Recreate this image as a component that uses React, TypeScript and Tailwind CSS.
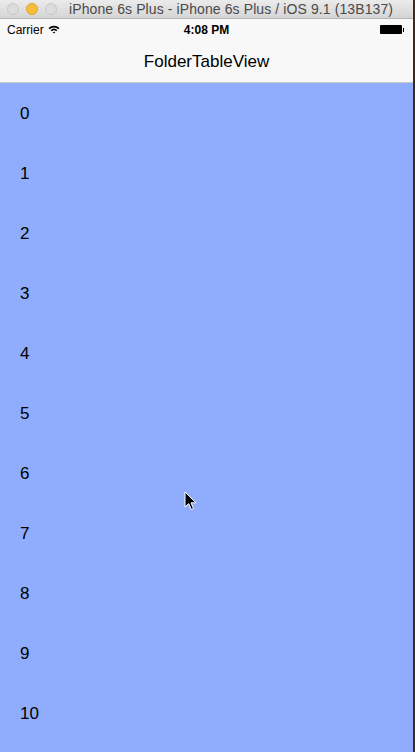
import React from 'react';

const ROWS = Array.from({ length: 11 }, (_, i) => i);

const App: React.FC = () => {
  return (
    <div className="relative h-[752px] w-[415px] overflow-hidden bg-[#3a2a22] font-['Liberation_Sans',Arial,sans-serif]">
      <div className="flex h-full w-[413px] flex-col">
        {/* window title bar */}
        <div className="flex h-[19px] shrink-0 items-center border-b border-[#b4b4b4] bg-gradient-to-b from-[#ebebeb] to-[#d5d5d5] pl-[7px]">
          <div className="flex items-center gap-[7px]">
            <span className="size-[12px] rounded-full border border-[#c8c8c8] bg-[#dcdcdc]"></span>
            <span className="size-[12px] rounded-full border border-[#dea42a] bg-[#f5be3d]"></span>
            <span className="size-[12px] rounded-full border border-[#c8c8c8] bg-[#dcdcdc]"></span>
          </div>
          <span className="ml-[12px] text-[14px] leading-none tracking-[0.1px] text-[#4a4a4a]">
            iPhone 6s Plus - iPhone 6s Plus / iOS 9.1 (13B137)
          </span>
        </div>

        {/* status + nav bar */}
        <div className="shrink-0 border-b border-[#c8c8c8] bg-[#f8f8f8]">
          <div className="relative flex h-[20px] items-center px-[7px] pt-[1px] text-[12px] text-black">
            <span>Carrier</span>
            <svg className="ml-[4px]" width="12" height="9" viewBox="0 0 12 9">
              <path d="M0.5 3 A8 8 0 0 1 11.5 3 L10.3 4.2 A6.3 6.3 0 0 0 1.7 4.2 Z" fill="#000" />
              <path d="M2.6 5.1 A5 5 0 0 1 9.4 5.1 L8.2 6.3 A3.3 3.3 0 0 0 3.8 6.3 Z" fill="#000" />
              <path d="M4.7 7.2 A2 2 0 0 1 7.3 7.2 L6 8.6 Z" fill="#000" />
            </svg>
            <span className="absolute left-1/2 -translate-x-1/2 font-bold">4:08 PM</span>
            <div className="ml-auto flex items-center pr-[2px]">
              <span className="h-[9px] w-[22px] rounded-[1px] bg-black"></span>
              <span className="ml-[1px] h-[4px] w-[1px] bg-black"></span>
            </div>
          </div>
          <div className="flex h-[43px] items-center justify-center pt-[3px] text-[17px] text-black">
            FolderTableView
          </div>
        </div>

        {/* table */}
        <div className="flex-1 overflow-hidden bg-[#8fadfc]">
          {ROWS.map((n) => (
            <div key={n} className="flex h-[60px] items-center pl-[20px] pt-[2px] text-[17px] text-black">
              {n}
            </div>
          ))}
        </div>
      </div>

      {/* mouse cursor */}
      <svg className="absolute left-[184px] top-[491px]" width="15" height="21" viewBox="0 0 15 21">
        <path d="M1 1 L1 16 L4.7 12.6 L7.3 18.5 L9.5 17.5 L7 11.8 L12 11.8 Z" fill="#000" stroke="#fff" strokeWidth="1" />
      </svg>
    </div>
  );
};

export default App;
